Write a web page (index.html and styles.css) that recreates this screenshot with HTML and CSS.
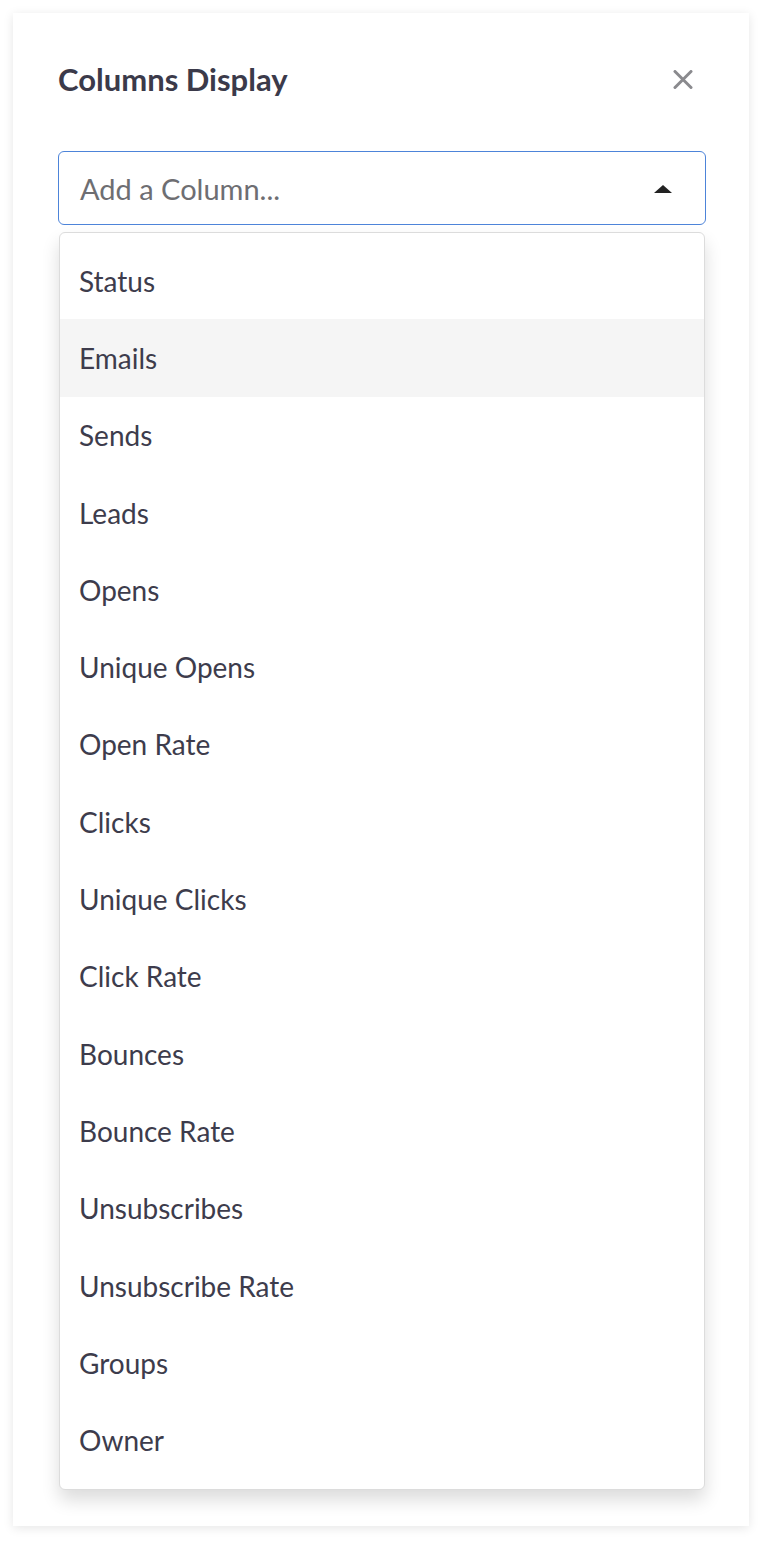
FILE: index.html
```html
<!DOCTYPE html>
<html>
<head>
<meta charset="utf-8">
<link rel="stylesheet" href="styles.css">
</head>
<body>
<div class="card">
  <div class="header">
    <h1 class="title">Columns Display</h1>
    <button class="close" aria-label="Close">
      <svg width="20" height="19" viewBox="0 0 20 19"><path d="M2 1.5 L18 17.5 M18 1.5 L2 17.5" stroke="#8a8a8e" stroke-width="3" stroke-linecap="round"/></svg>
    </button>
  </div>
  <div class="select-wrap">
    <div class="select">
      <span class="placeholder">Add a Column...</span>
      <svg class="caret" width="18" height="8" viewBox="0 0 18 8"><path d="M0 8 L9 0 L18 8 Z" fill="#222"/></svg>
    </div>
    <ul class="menu">
      <li class="item">Status</li>
      <li class="item active">Emails</li>
      <li class="item">Sends</li>
      <li class="item">Leads</li>
      <li class="item">Opens</li>
      <li class="item">Unique Opens</li>
      <li class="item">Open Rate</li>
      <li class="item">Clicks</li>
      <li class="item">Unique Clicks</li>
      <li class="item">Click Rate</li>
      <li class="item">Bounces</li>
      <li class="item">Bounce Rate</li>
      <li class="item">Unsubscribes</li>
      <li class="item">Unsubscribe Rate</li>
      <li class="item">Groups</li>
      <li class="item">Owner</li>
    </ul>
  </div>
</div>
</body>
</html>
```
FILE: styles.css
```css
html, body {
  margin: 0;
  padding: 0;
  background: #ffffff;
}
body {
  font-family: "Lato", "Open Sans", sans-serif;
  color: #3a3948;
}
.card {
  margin: 13px;
  width: 736px;
  height: 1513px;
  box-sizing: border-box;
  background: #fff;
  box-shadow: 0 2px 10px rgba(0, 0, 0, 0.10);
  padding: 44px 43px 0 45px;
}
.header {
  display: flex;
  justify-content: space-between;
  align-items: center;
  height: 44px;
}
.title {
  margin: 0;
  font-size: 31px;
  font-weight: 700;
  color: #3b3a4a;
  letter-spacing: 0;
}
.close {
  border: none;
  background: none;
  padding: 0;
  margin-right: 13px;
  display: flex;
}
.select-wrap {
  position: relative;
  margin-top: 50px;
}
.select {
  height: 74px;
  box-sizing: border-box;
  border: 1.5px solid #4d84d9;
  border-radius: 6px;
  display: flex;
  align-items: center;
  justify-content: space-between;
  padding: 0 33px 0 21px;
}
.placeholder {
  font-size: 29px;
  color: #6e6e72;
}
.caret {
  margin-top: 2px;
}
.menu {
  position: absolute;
  top: 81px;
  left: 1px;
  right: 1px;
  list-style: none;
  margin: 0;
  padding: 9px 0 10px 0;
  background: #fff;
  border: 1px solid #dcdcdc;
  border-radius: 6px;
  box-shadow: 0 10px 18px rgba(0, 0, 0, 0.14);
}
.item {
  height: 77.3px;
  display: flex;
  align-items: center;
  padding-left: 19px;
  font-size: 28px;
  color: #3d3c4c;
}
.item.active {
  background: #f5f5f5;
}
```
